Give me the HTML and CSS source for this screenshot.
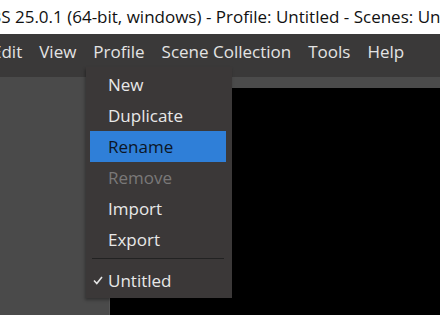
FILE: index.html
```html
<!DOCTYPE html>
<html lang="en">

<head>
    <meta charset="UTF-8">
    <meta name="viewport" content="width=device-width, initial-scale=1.0">
    <title>OBS 25.0.1 - Profile menu</title>
    <link rel="stylesheet" href="styles.css">
</head>

<body>
    <div class="window">
        <div class="titlebar">
            <span class="title">OBS 25.0.1 (64-bit, windows) - Profile: Untitled - Scenes: Untitled</span>
        </div>
        <nav class="menubar">
            <span class="menu-item">Edit</span>
            <span class="menu-item">View</span>
            <span class="menu-item open">Profile</span>
            <span class="menu-item">Scene Collection</span>
            <span class="menu-item">Tools</span>
            <span class="menu-item">Help</span>
        </nav>
        <div class="workspace">
            <div class="side-panel"></div>
            <div class="preview">
                <div class="preview-header"></div>
                <div class="preview-canvas"></div>
            </div>
        </div>

        <!-- Profile dropdown -->
        <ul class="dropdown">
            <li class="entry">New</li>
            <li class="entry">Duplicate</li>
            <li class="entry active">Rename</li>
            <li class="entry disabled">Remove</li>
            <li class="entry">Import</li>
            <li class="entry">Export</li>
            <li class="separator"></li>
            <li class="entry checked">
                <svg class="check" width="10" height="9" viewBox="0 0 10 9">
                    <polyline points="1,4.5 3.8,7.5 9,1" fill="none" stroke="#e6e6e6" stroke-width="1.6" />
                </svg>
                Untitled
            </li>
        </ul>
    </div>
</body>

</html>
```

FILE: styles.css
```css
* {
    margin: 0;
    padding: 0;
    box-sizing: border-box;
}

body {
    width: 440px;
    height: 315px;
    overflow: hidden;
    background: #000;
    font-family: "Open Sans", "Noto Sans", sans-serif;
}

.window {
    position: relative;
    width: 440px;
    height: 315px;
    display: flex;
    flex-direction: column;
}

.titlebar {
    height: 34px;
    background: #fff;
    color: #111;
    font-size: 17px;
    line-height: 34px;
    white-space: nowrap;
    overflow: hidden;
}

.title {
    display: inline-block;
    margin-left: -23px;
}

.menubar {
    height: 34px;
    background: #3a3939;
    display: flex;
    align-items: center;
    gap: 17px;
    margin-left: -8px;
}

.menu-item {
    color: #e4e4e4;
    font-size: 17px;
    white-space: nowrap;
}

.workspace {
    flex: 1;
    display: flex;
    background: #3a3939;
    padding-top: 9px;
}

.side-panel {
    width: 110px;
    background: #4a4a4a;
    border-right: 1px solid #555;
}

.preview {
    flex: 1;
    display: flex;
    flex-direction: column;
}

.preview-header {
    height: 11px;
    background: #4b4b4b;
}

.preview-canvas {
    flex: 1;
    background: #000;
}

.dropdown {
    position: absolute;
    left: 86px;
    top: 67px;
    width: 146px;
    padding: 2px 6px 2px 4px;
    list-style: none;
    background: #3b3838;
    box-shadow: -1px 2px 3px rgba(0, 0, 0, 0.35);
}

.entry {
    position: relative;
    height: 31px;
    line-height: 31px;
    padding-left: 18px;
    color: #e8e8e8;
    font-size: 17px;
}

.entry.active {
    background: #2f7fd8;
    color: #0c1626;
}

.entry.disabled {
    color: #7a7878;
}

.separator {
    height: 1px;
    margin: 3px 2px 6px 2px;
    background: #222;
}

.check {
    position: absolute;
    left: 3px;
    top: 11px;
}
```
